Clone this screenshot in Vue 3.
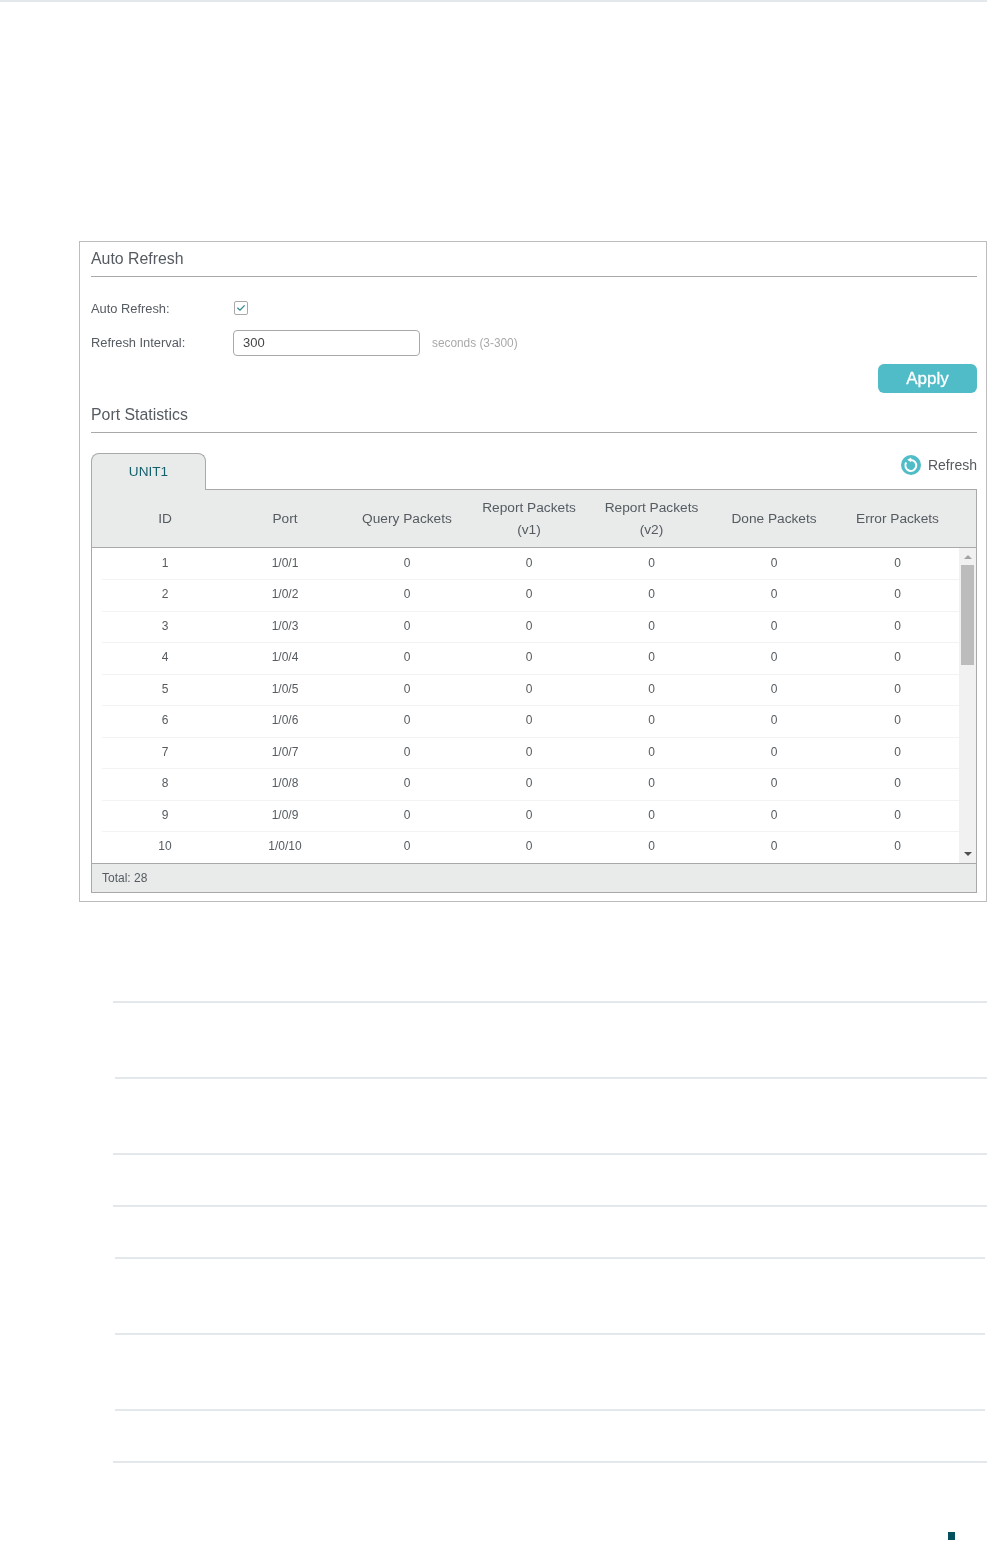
<script setup>
const columns = [
  { label: 'ID' },
  { label: 'Port' },
  { label: 'Query Packets' },
  { label: 'Report Packets', sub: '(v1)' },
  { label: 'Report Packets', sub: '(v2)' },
  { label: 'Done Packets' },
  { label: 'Error Packets' },
]
const rows = Array.from({ length: 10 }, (_, i) => [i + 1, `1/0/${i + 1}`, 0, 0, 0, 0, 0])
const rules = [
  { cls: 'a', gap: 99 },
  { cls: 'b', gap: 74 },
  { cls: 'a', gap: 74 },
  { cls: 'a', gap: 50 },
  { cls: 'c', gap: 50 },
  { cls: 'c', gap: 74 },
  { cls: 'c', gap: 74 },
  { cls: 'a', gap: 50 },
]
</script>

<template>
  <div class="page">
    <div class="topbar"></div>
    <section class="panel">
      <h2 class="title">Auto Refresh</h2>
      <div class="field first">
        <label class="label">Auto Refresh:</label>
        <span class="check">
          <svg width="12" height="12" viewBox="0 0 12 12"><path d="M2.4 5.8 L5 8.2 L9.6 3.4" fill="none" stroke="#2d8792" stroke-width="1.3"/></svg>
        </span>
      </div>
      <div class="field second">
        <label class="label">Refresh Interval:</label>
        <span class="input">300</span>
        <span class="hint">seconds (3-300)</span>
      </div>
      <div class="actions"><button class="apply">Apply</button></div>
      <h2 class="title stats">Port Statistics</h2>
      <div class="tabbar">
        <div class="tab">UNIT1</div>
        <div class="refresh">
          <svg width="20" height="20" viewBox="0 0 20 20">
            <circle cx="10" cy="10" r="10" fill="#4fbcc8"/>
            <path d="M5.2 7.4 A5.5 5.5 0 1 0 10 4.9" fill="none" stroke="#fff" stroke-width="2"/>
            <path d="M10.2 2.4 L10.2 7.2 L6.2 4.8 Z" fill="#fff"/>
          </svg>
          <span>Refresh</span>
        </div>
      </div>
      <div class="table">
        <div class="head">
          <div v-for="(c, i) in columns" :key="i" class="hcell">
            <div>{{ c.label }}</div>
            <div v-if="c.sub">{{ c.sub }}</div>
          </div>
        </div>
        <div class="body">
          <div class="rows">
            <div v-for="(r, i) in rows" :key="i" class="row">
              <div v-for="(v, j) in r" :key="j" class="cell">{{ v }}</div>
            </div>
          </div>
          <div class="scroll">
            <span class="arrow up"></span>
            <span class="thumb"></span>
            <span class="arrow down"></span>
          </div>
        </div>
        <div class="foot">Total: 28</div>
      </div>
    </section>
    <div v-for="(r, i) in rules" :key="i" class="rule" :class="r.cls" :style="{ marginTop: r.gap + 'px' }"></div>
    <div class="marker"></div>
  </div>
</template>

<style>
html, body { margin: 0; background: #fff; }
</style>

<style scoped>
.page {
  width: 987px;
  height: 1542px;
  overflow: hidden;
  background: #fff;
  font-family: "Liberation Sans", Arial, sans-serif;
  color: #555b60;
}
.topbar { height: 2px; background: #e3e8ec; }
.panel {
  box-sizing: border-box;
  width: 908px;
  height: 661px;
  margin: 239px 0 0 79px;
  padding: 0 9px 0 11px;
  border: 1px solid #bdbdbd;
  will-change: transform;
}
.title {
  margin: 0;
  height: 34px;
  border-bottom: 1px solid #a9a9a9;
  font-size: 15.85px;
  font-weight: 400;
  line-height: 33px;
  color: #555b60;
}
.field { display: flex; align-items: center; font-size: 12.85px; }
.first { height: 26px; margin-top: 18px; }
.second { height: 26px; margin-top: 9px; }
.label { width: 142px; }
.second .label { padding-bottom: 2px; }
.check {
  box-sizing: border-box;
  width: 14px;
  height: 14px;
  margin-left: 1px;
  border: 1px solid #a9a9a9;
  border-radius: 2px;
  display: flex;
}
.check svg { display: block; }
.input {
  box-sizing: border-box;
  width: 187px;
  height: 26px;
  padding-left: 9px;
  border: 1px solid #a9a9a9;
  border-radius: 4px;
  line-height: 24px;
  font-size: 13px;
  color: #444;
}
.hint { margin-left: 12px; font-size: 11.85px; color: #a9a9a9; }
.actions { display: flex; justify-content: flex-end; margin-top: 8px; }
.apply {
  width: 99px;
  height: 29px;
  border: 0;
  border-radius: 6px;
  background: #4fbcc8;
  color: #fff;
  font: 400 17px "Liberation Sans", Arial, sans-serif;
  -webkit-text-stroke: 0.3px #fff;
  padding: 0;
}
.stats { margin-top: 5px; }
.tabbar {
  display: flex;
  justify-content: space-between;
  align-items: flex-start;
  height: 57px;
}
.tab {
  box-sizing: border-box;
  width: 115px;
  height: 37px;
  margin-top: 20px;
  border: 1px solid #a9a9a9;
  border-bottom: 0;
  border-radius: 8px 8px 0 0;
  background: #e9ebeb;
  color: #16606c;
  font-size: 13.6px;
  line-height: 36px;
  text-align: center;
  position: relative;
  z-index: 1;
}
.refresh {
  display: flex;
  align-items: center;
  gap: 7px;
  margin-top: 22px;
  font-size: 14px;
}
.table {
  box-sizing: border-box;
  width: 886px;
  height: 404px;
  margin-top: -1px;
  border: 1px solid #a9a9a9;
  display: flex;
  flex-direction: column;
}
.head,
.row {
  display: grid;
  grid-template-columns: 122px 118px 126px 118px 127px 118px 126px;
}
.head {
  box-sizing: border-box;
  height: 58px;
  padding-left: 12px;
  padding-right: 17px;
  background: #e9ebeb;
  border-bottom: 1px solid #a9a9a9;
  font-size: 13.7px;
  line-height: 22px;
}
.hcell {
  display: flex;
  flex-direction: column;
  justify-content: center;
  align-items: center;
}
.hcell:last-child,
.cell:last-child { padding-left: 3px; }
.body { display: flex; height: 315px; }
.rows { flex: 1; padding-left: 12px; overflow: hidden; }
.row {
  height: 31.5px;
  box-sizing: border-box;
  border-bottom: 1px solid #f3f3f3;
  margin-left: -2px;
  padding-left: 2px;
  font-size: 12px;
  line-height: 28px;
}
.row:first-child { margin-top: 0.5px; }
.row:last-child { border-bottom: 0; }
.cell { text-align: center; }
.scroll {
  width: 17px;
  background: #f1f1f1;
  position: relative;
  flex: none;
}
.thumb {
  position: absolute;
  left: 2px;
  top: 17px;
  width: 13px;
  height: 100px;
  background: #bcbcbc;
}
.arrow {
  position: absolute;
  left: 5px;
  width: 0;
  height: 0;
  border-left: 4px solid transparent;
  border-right: 4px solid transparent;
}
.up { top: 7px; border-bottom: 4px solid #a3a3a3; }
.down { bottom: 7px; border-top: 4px solid #505050; }
.foot {
  height: 29px;
  box-sizing: border-box;
  padding-left: 10px;
  background: #e9ebeb;
  border-top: 1px solid #a9a9a9;
  font-size: 12px;
  line-height: 28px;
}
.rule { height: 2px; background: #e3e8ec; }
.a { margin-left: 113px; width: 874px; }
.b { margin-left: 115px; width: 872px; }
.c { margin-left: 115px; width: 870px; }
.marker {
  width: 7px;
  height: 8px;
  margin: 69px 0 0 948px;
  background: #04505f;
}
</style>
